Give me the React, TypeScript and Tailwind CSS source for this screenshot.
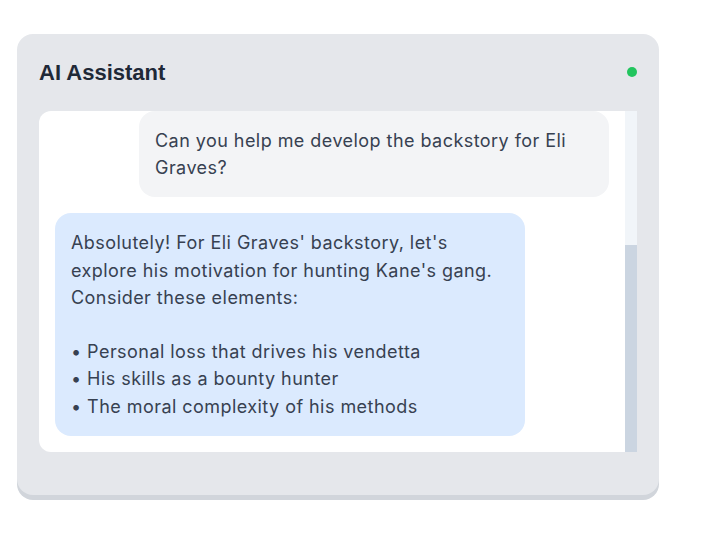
import { useLayoutEffect, useRef } from "react";

const messages = [
  {
    role: "user",
    text: "Can you help me develop the backstory for Eli Graves?",
  },
  {
    role: "assistant",
    text: "Absolutely! For Eli Graves' backstory, let's explore his motivation for hunting Kane's gang. Consider these elements:\n\n• Personal loss that drives his vendetta\n• His skills as a bounty hunter\n• The moral complexity of his methods",
  },
];

export default function App() {
  const listRef = useRef<HTMLDivElement>(null);

  useLayoutEffect(() => {
    // keep the latest message in view
    if (listRef.current) {
      listRef.current.scrollTop = listRef.current.scrollHeight;
    }
  }, []);

  return (
    <div className="min-h-screen bg-white pt-[34px] pl-[17px] font-['Inter','Liberation_Sans',sans-serif]">
      <div className="w-[642px] rounded-2xl bg-[#e5e7eb] px-[22px] pt-[24px] pb-[43px] shadow-[0_5px_0_0_#d1d5db]">
        {/* Header */}
        <div className="mb-[25px] flex h-[28px] items-center justify-between">
          <h2 className="font-['Liberation_Sans',Arial,sans-serif] text-[22px] font-bold text-[#1f2937]">
            AI Assistant
          </h2>
          <span className="h-[10px] w-[10px] rounded-full bg-[#22c55e]"></span>
        </div>

        {/* Chat */}
        <div className="flex h-[341px] overflow-hidden rounded-l-xl bg-white">
          <div ref={listRef} className="flex flex-1 flex-col gap-4 overflow-hidden p-4">
            {messages.map((m, i) => (
              <div
                key={i}
                className={`w-[470px] shrink-0 whitespace-pre-line rounded-2xl p-4 text-[18px] leading-[27.2px] tracking-[0.025em] text-[#374151] ${
                  m.role === "user" ? "self-end bg-[#f3f4f6]" : "self-start bg-[#dbeafe]"
                }`}
              >
                {m.text}
              </div>
            ))}
          </div>
          {/* scrollbar */}
          <div className="flex w-3 flex-col">
            <div className="flex-1 bg-[#f1f5f9]"></div>
            <div className="h-[207px] bg-[#cbd5e1]"></div>
          </div>
        </div>
      </div>
    </div>
  );
}
